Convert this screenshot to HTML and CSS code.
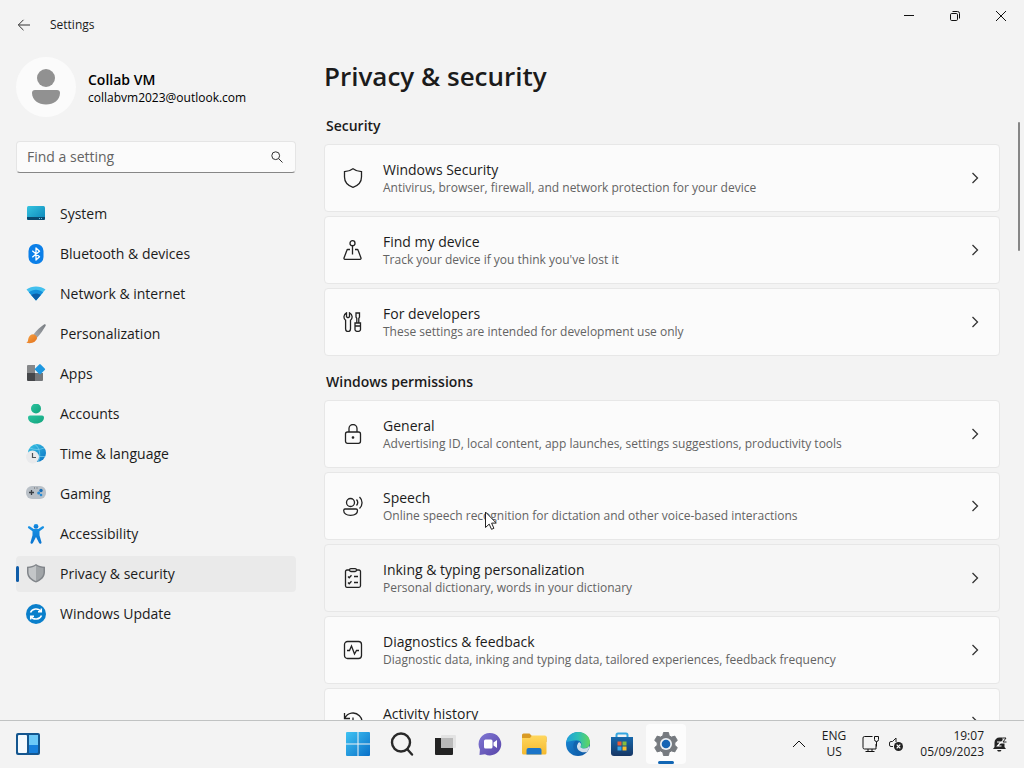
FILE: index.html
```html
<!DOCTYPE html>
<html lang="en">
<head>
  <meta charset="UTF-8" />
  <meta name="viewport" content="width=device-width, initial-scale=1.0" />
  <title>Settings</title>
  <link rel="stylesheet" href="styles.css">
</head>
<body>
  <svg class="defs" width="0" height="0" aria-hidden="true">
    <defs>
      <linearGradient id="gSystem" x1="0" y1="0" x2="1" y2="1"><stop offset="0" stop-color="#35c4e0"/><stop offset="1" stop-color="#0b84b8"/></linearGradient>
      <linearGradient id="gBlue" x1="0" y1="0" x2="0" y2="1"><stop offset="0" stop-color="#1a94e6"/><stop offset="1" stop-color="#0a74d0"/></linearGradient>
      <linearGradient id="gGreen" x1="0" y1="0" x2="1" y2="1"><stop offset="0" stop-color="#2cc3a0"/><stop offset="1" stop-color="#12a47c"/></linearGradient>
      <linearGradient id="gHandle" x1="1" y1="0" x2="0" y2="1"><stop offset="0" stop-color="#777b80"/><stop offset="1" stop-color="#a9adb2"/></linearGradient>
      <linearGradient id="gOrange" x1="0" y1="0" x2="1" y2="1"><stop offset="0" stop-color="#f7a548"/><stop offset="1" stop-color="#e2701a"/></linearGradient>
      <linearGradient id="gGlobe" x1="0" y1="0" x2="1" y2="1"><stop offset="0" stop-color="#3cc6e4"/><stop offset="1" stop-color="#0a72c4"/></linearGradient>
      <linearGradient id="gWin" x1="0" y1="0" x2="1" y2="1"><stop offset="0" stop-color="#3fc3f3"/><stop offset="1" stop-color="#0a70c8"/></linearGradient>
      <linearGradient id="gChat" x1="0" y1="0" x2="1" y2="1"><stop offset="0" stop-color="#8078d4"/><stop offset="1" stop-color="#5844a8"/></linearGradient>
      <linearGradient id="gFolder" x1="0" y1="0" x2="0" y2="1"><stop offset="0" stop-color="#ffd75e"/><stop offset="1" stop-color="#f4b92e"/></linearGradient>
      <linearGradient id="gEdge" x1="0" y1="0" x2="1" y2="0"><stop offset="0" stop-color="#1f9fdc"/><stop offset=".5" stop-color="#2dbfb4"/><stop offset="1" stop-color="#62d65c"/></linearGradient>
      <linearGradient id="gEdgeLow" x1="0" y1="0" x2="1" y2="1"><stop offset="0" stop-color="#1b8fdc"/><stop offset="1" stop-color="#0b4f9c"/></linearGradient>
      <linearGradient id="gStore" x1="0" y1="0" x2="0" y2="1"><stop offset="0" stop-color="#1668ac"/><stop offset="1" stop-color="#173765"/></linearGradient>
    </defs>
  </svg>

  <div class="window">
    <header class="titlebar">
      <button class="back" aria-label="Back">
        <svg width="14" height="14" viewBox="0 0 14 14" class="line"><path d="M13 7H1.500M6.500 1.800 1.300 7l5.200 5.200"/></svg>
      </button>
      <span class="app-name">Settings</span>
      <div class="caption-buttons">
        <button aria-label="Minimize"><svg width="12" height="12" viewBox="0 0 12 12" class="line dark"><path d="M1 5.500h10"/></svg></button>
        <button aria-label="Restore"><svg width="12" height="12" viewBox="0 0 12 12" class="line dark"><rect x="1.500" y="3.500" width="7" height="7" rx="1.200"/><path d="M3.500 1.500H8.500a2 2 0 0 1 2 2V8.500"/></svg></button>
        <button aria-label="Close"><svg width="12" height="12" viewBox="0 0 12 12" class="line dark"><path d="M1 1l10 10M11 1 1 11"/></svg></button>
      </div>
    </header>

    <div class="content">
      <aside class="sidebar">
        <div class="account">
          <span class="avatar">
            <svg width="30" height="36" viewBox="0 0 30 36" fill="#919191"><circle cx="15" cy="9" r="9"/><path d="M4 21h22a3 3 0 0 1 3 3c0 7-6.500 11.500-14 11.500S1 31 1 24a3 3 0 0 1 3-3z"/></svg>
          </span>
          <div class="account-text">
            <div class="account-name">Collab VM</div>
            <div class="account-mail">collabvm2023@outlook.com</div>
          </div>
        </div>

        <div class="search">
          <input id="find" type="text" placeholder="Find a setting" aria-label="Find a setting">
          <label for="find"><svg width="12" height="12" viewBox="0 0 12 12" class="line"><circle cx="4.700" cy="4.700" r="3.900"/><path d="M7.600 7.600l3.900 3.900"/></svg></label>
        </div>

        <nav class="menu">
          <a href="#"><svg width="20" height="20" viewBox="0 0 20 20"><rect x="1" y="2" width="18" height="14" rx="1.500" fill="url(#gSystem)"/><path d="M1 13h18v1.500a1.500 1.500 0 0 1-1.500 1.500h-15A1.500 1.500 0 0 1 1 14.500z" fill="#0a4a70"/><path d="M13 14.500h1M15 14.500h1" stroke="#6bc6e8"/></svg>System</a>
          <a href="#"><svg width="20" height="20" viewBox="0 0 20 20"><rect x="2.500" y="0" width="15" height="20" rx="7" fill="#0b7fe8"/><path d="M6.300 6.800l7.200 6-3.500 3.200V4l3.500 3.200-7.200 6" fill="none" stroke="#fff" stroke-width="1.300" stroke-linejoin="round"/></svg>Bluetooth &amp; devices</a>
          <a href="#"><svg width="20" height="20" viewBox="0 0 20 20"><path d="M.5 5.500C5.500 1.600 14.500 1.600 19.500 5.500L10 16.500z" fill="#42c0ee"/><path d="M2.800 8.200c4.300-3.400 10.100-3.400 14.400 0L10 16.500z" fill="#1590dc"/><path d="M5.200 11c3-2 6.600-2 9.600 0L10 16.500z" fill="#0c5ea8"/></svg>Network &amp; internet</a>
          <a href="#"><svg width="20" height="20" viewBox="0 0 20 20"><path d="M18 .6c1.200-.8 2.200.3 1.500 1.500-2 3.600-5.200 8.200-8.500 11.700L7.500 10.500C10.600 6.500 14.500 3 18 .6z" fill="url(#gHandle)"/><path d="M7.300 10.300c2 .4 3.400 1.700 3.800 3.700-.8 3.500-5 6.300-10.800 4.700 1.800-.8 1.600-2 2-4 .5-2.600 2.600-4.300 5-4.400z" fill="url(#gOrange)"/></svg>Personalization</a>
          <a href="#"><svg width="20" height="20" viewBox="0 0 20 20"><path d="M2 1h7v8H1V2a1 1 0 0 1 1-1z" fill="#858789"/><path d="M1 9h8v8H2a1 1 0 0 1-1-1z" fill="#45474a"/><path d="M9 9h8v7a1 1 0 0 1-1 1H9z" fill="#74777a"/><path d="M13.200.500a1 1 0 0 1 1.500 0l4 4a1 1 0 0 1 0 1.500l-4 4a1 1 0 0 1-1.500 0l-4-4a1 1 0 0 1 0-1.500z" fill="#1d97e0"/></svg>Apps</a>
          <a href="#"><svg width="20" height="20" viewBox="0 0 20 20" fill="url(#gGreen)"><circle cx="10" cy="4.500" r="5" /><path d="M4 11.500h12a2 2 0 0 1 2 2c0 3.800-3.600 6-8 6s-8-2.200-8-6a2 2 0 0 1 2-2z"/></svg>Accounts</a>
          <a href="#"><svg width="20" height="20" viewBox="0 0 20 20"><circle cx="11" cy="9" r="9" fill="url(#gGlobe)"/><path d="M9 0.500c5 3 6 12 3 17.500M4 4c4 2 10 2 14 0M12 12.500h7" fill="none" stroke="#8adcf3" stroke-width=".6"/><circle cx="6.500" cy="13" r="6.500" fill="#e9eaec"/><path d="M6.500 9v4.500h3.500" fill="none" stroke="#4c5055" stroke-width="1.200"/></svg>Time &amp; language</a>
          <a href="#"><svg width="20" height="20" viewBox="0 0 20 20"><rect x="0" y="2" width="20" height="13" rx="6" fill="#b9c0c7"/><path d="M3 8.500h5M5.500 6v5" stroke="#383d43" stroke-width="1.300"/><path d="M8 4h1M10.500 4h1" stroke="#666"/><circle cx="15" cy="6.500" r="1.700" fill="#176bb4"/><circle cx="12.700" cy="9" r="1.500" fill="#2a8bd4"/><circle cx="15" cy="11" r="1.300" fill="#2a8bd4"/></svg>Gaming</a>
          <a href="#"><svg width="20" height="20" viewBox="0 0 20 20" fill="url(#gBlue)"><circle cx="10" cy="2.400" r="2.400"/><path d="M3.700 2.300l4 2.600h4.600l4-2.600c1.400-.7 2.500 1 1.300 1.900L13.500 7.300v4l2 6.900c.3 1.500-1.700 2.300-2.400.9L10 13l-3.100 6.100c-.7 1.400-2.700.6-2.400-.9l2-6.900v-4L2.400 4.200C1.200 3.300 2.300 1.600 3.700 2.300z"/></svg>Accessibility</a>
          <a href="#" class="active"><svg width="20" height="20" viewBox="0 0 20 20"><path d="M10 0c2.500 2 5.500 2.700 9 2.800V8c0 5-3.500 8.500-9 10.500C4.500 16.500 1 13 1 8V2.800C4.500 2.700 7.500 2 10 0z" fill="#81858a"/><path d="M10 1.500c2.200 1.500 4.600 2.200 7.500 2.500v4c0 4-2.800 7-7.500 8.900z" fill="#a1a5a8"/><path d="M10 1.500C7.800 3 5.400 3.700 2.500 4v4c0 4 2.800 7 7.500 8.900z" fill="#c3c6c8"/></svg>Privacy &amp; security</a>
          <a href="#"><svg width="20" height="20" viewBox="0 0 20 20"><circle cx="10" cy="10" r="10" fill="#0a7fcb"/><path d="M4.500 8.500C6 4.300 12.500 3.500 15 7.500M15.300 4.500v3.300H12M15.500 11.500C14 15.700 7.500 16.500 5 12.500M4.700 15.500v-3.300H8" fill="none" stroke="#fff" stroke-width="1.500"/></svg>Windows Update</a>
        </nav>
      </aside>

      <main class="page">
        <h1>Privacy &amp; security</h1>

        <h2>Security</h2>
        <div class="cards">
          <button class="card">
            <svg width="20" height="20" viewBox="0 0 20 20" class="line icon"><path d="M10 .8C12.500 2.700 15 3.500 18.500 3.700V9c0 5-3.200 8.500-8.500 10.300C4.700 17.500 1.500 14 1.500 9V3.700C5 3.500 7.500 2.700 10 .8z"/></svg>
            <span class="text"><span class="name">Windows Security</span><span class="desc">Antivirus, browser, firewall, and network protection for your device</span></span>
            <svg width="8" height="12" viewBox="0 0 8 12" class="line chevron"><path d="M1.500 1l5 5-5 5"/></svg>
          </button>
          <button class="card">
            <svg width="20" height="20" viewBox="0 0 20 20" class="line icon"><circle cx="9.500" cy="3.200" r="2.500"/><path d="M9.500 6v8.500M7 9.500H4.800a1 1 0 0 0-.9.700L1 18a1 1 0 0 0 .9 1.300h15.200A1 1 0 0 0 18 18l-2.900-7.800a1 1 0 0 0-.9-.7H12"/></svg>
            <span class="text"><span class="name">Find my device</span><span class="desc">Track your device if you think you've lost it</span></span>
            <svg width="8" height="12" viewBox="0 0 8 12" class="line chevron"><path d="M1.500 1l5 5-5 5"/></svg>
          </button>
          <button class="card">
            <svg width="20" height="20" viewBox="0 0 20 20" class="line icon"><path d="M3.500.8v4l1.500 1 1.500-1v-4C9.800 2.300 9.800 6.700 7.500 8.200v8.900a2.400 2.400 0 0 1-4.900 0V8.200C.3 6.700.3 2.300 3.500.8zM13 1h3.500v4l-.7 1.500V11h-2V6.500L13 5zM12 11h5.500v6a2 2 0 0 1-2 2.300H14a2 2 0 0 1-2-2.300zM12 14h5.500"/></svg>
            <span class="text"><span class="name">For developers</span><span class="desc">These settings are intended for development use only</span></span>
            <svg width="8" height="12" viewBox="0 0 8 12" class="line chevron"><path d="M1.500 1l5 5-5 5"/></svg>
          </button>
        </div>

        <h2>Windows permissions</h2>
        <div class="cards">
          <button class="card">
            <svg width="20" height="20" viewBox="0 0 20 20" class="line icon"><rect x="2.500" y="8" width="15" height="11.300" rx="2"/><path d="M6 8V4.500a4 4 0 0 1 8 0V8"/><circle cx="10" cy="13.500" r=".7" fill="#222"/></svg>
            <span class="text"><span class="name">General</span><span class="desc">Advertising ID, local content, app launches, settings suggestions, productivity tools</span></span>
            <svg width="8" height="12" viewBox="0 0 8 12" class="line chevron"><path d="M1.500 1l5 5-5 5"/></svg>
          </button>
          <button class="card">
            <svg width="20" height="20" viewBox="0 0 20 20" class="line icon"><circle cx="7.500" cy="6.500" r="4"/><path d="M2 13h11a1.500 1.500 0 0 1 1.500 1.500c0 3-3 4.800-7 4.800s-6.800-1.800-6.800-4.800A1.500 1.500 0 0 1 2 13zM13.500 3.500c1.500 1.800 1.500 4.200 0 6M16.500 1c3.400 3.200 3.400 8.300 0 11.500"/></svg>
            <span class="text"><span class="name">Speech</span><span class="desc">Online speech recognition for dictation and other voice-based interactions</span></span>
            <svg width="8" height="12" viewBox="0 0 8 12" class="line chevron"><path d="M1.500 1l5 5-5 5"/></svg>
            <svg width="12" height="20" viewBox="0 0 12 20" class="cursor"><path d="M.5 1v15.500l3.700-3.400 2.300 5.200 2.400-1-2.300-5.200h4.700z" fill="#fff" stroke="#222"/></svg>
          </button>
          <button class="card hover">
            <svg width="20" height="20" viewBox="0 0 20 20" class="line icon"><path d="M7 2H4a1.500 1.500 0 0 0-1.500 1.500V18A1.500 1.500 0 0 0 4 19.300h12a1.500 1.500 0 0 0 1.500-1.500V3.500A1.500 1.500 0 0 0 16 2h-3"/><rect x="6.500" y=".7" width="7" height="2.800" rx="1.400"/><path d="M5 8.500l1.200 1.200L8.500 7.300M5 14.500l1.200 1.200 2.300-2.400M11 8.500h4M11 14.500h4"/></svg>
            <span class="text"><span class="name">Inking &amp; typing personalization</span><span class="desc">Personal dictionary, words in your dictionary</span></span>
            <svg width="8" height="12" viewBox="0 0 8 12" class="line chevron"><path d="M1.500 1l5 5-5 5"/></svg>
          </button>
          <button class="card">
            <svg width="20" height="20" viewBox="0 0 20 20" class="line icon"><rect x="1.500" y="1.500" width="17" height="17" rx="3"/><path d="M4 10.500h2.500L8.500 6l3 8 2-3.500H16"/></svg>
            <span class="text"><span class="name">Diagnostics &amp; feedback</span><span class="desc">Diagnostic data, inking and typing data, tailored experiences, feedback frequency</span></span>
            <svg width="8" height="12" viewBox="0 0 8 12" class="line chevron"><path d="M1.500 1l5 5-5 5"/></svg>
          </button>
          <button class="card">
            <svg width="20" height="20" viewBox="0 0 20 20" class="line icon"><path d="M1.500 1v5.500H7M1.800 6.300A9 9 0 1 1 1 10.500M10 5.500v5h4"/></svg>
            <span class="text"><span class="name">Activity history</span><span class="desc"></span></span>
            <svg width="8" height="12" viewBox="0 0 8 12" class="line chevron"><path d="M1.500 1l5 5-5 5"/></svg>
          </button>
        </div>
        <div class="scroll-thumb"></div>
      </main>
    </div>
  </div>

  <footer class="taskbar">
    <div class="side">
      <button aria-label="Widgets"><svg width="24" height="22" viewBox="0 0 24 22"><rect width="24" height="22" rx="2" fill="#14568f"/><rect x="2" y="2" width="9" height="18" rx="1" fill="#f4fafe"/><rect x="13" y="2" width="9" height="10" fill="#6cc9f8"/><path d="M13 12h9v7a1 1 0 0 1-1 1h-8z" fill="#1780dc"/></svg></button>
    </div>
    <div class="apps">
      <button aria-label="Start"><svg width="24" height="24" viewBox="0 0 24 24" fill="url(#gWin)"><path d="M1 0h10.500v11.500H0V1a1 1 0 0 1 1-1zM12.500 0H23a1 1 0 0 1 1 1v10.500H12.500zM0 12.500h11.500V24H1a1 1 0 0 1-1-1zM12.500 12.500H24V23a1 1 0 0 1-1 1H12.500z"/></svg></button>
      <button aria-label="Search"><svg width="24" height="24" viewBox="0 0 24 24" fill="none" stroke="#282828" stroke-width="2.400"><circle cx="11" cy="10.500" r="9"/><path d="M17.300 17.300l4.700 5.200" stroke-linecap="round"/></svg></button>
      <button aria-label="Task view"><svg width="24" height="24" viewBox="0 0 24 24"><rect x="7" y="3" width="15" height="13" rx="1" fill="#e3e3e3"/><path d="M1 6h6v10h12v6a1 1 0 0 1-1 1H2a1 1 0 0 1-1-1z" fill="#232323"/><path d="M7 6h12v10H7z" fill="#b9b9b9"/></svg></button>
      <button aria-label="Chat"><svg width="24" height="24" viewBox="0 0 24 24"><path d="M12 1a11.200 11.200 0 1 1-5 21.200L1.500 23 1.900 17.500A11.200 11.200 0 0 1 12 1z" fill="url(#gChat)"/><rect x="6" y="7.500" width="8.500" height="9" rx="1.500" fill="#fff"/><path d="M15.500 10.500L19 8v8l-3.500-2.500z" fill="#fff"/></svg></button>
      <button aria-label="File Explorer"><svg width="26" height="24" viewBox="0 0 26 24"><path d="M1 3a1.500 1.500 0 0 1 1.500-1.500h6L11 4H24a1.500 1.500 0 0 1 1.500 1.500V10H1z" fill="#d99a24"/><path d="M1 6h8l2-2.500H24A1.500 1.500 0 0 1 25.500 5V21a1.500 1.500 0 0 1-1.500 1.500H2.500A1.500 1.500 0 0 1 1 21z" fill="url(#gFolder)"/><path d="M7.500 16h11a2 2 0 0 1 2 2v4.500h-15V18a2 2 0 0 1 2-2z" fill="#1a74c8"/></svg></button>
      <button aria-label="Edge"><svg width="24" height="24" viewBox="0 0 24 24"><circle cx="12" cy="12" r="12" fill="url(#gEdgeLow)"/><path d="M.3 10C1.500 4 6.200 0 12 0c7 0 12 4.700 12 10.300 0 4-2.800 6.200-6 6.200-2.500 0-4.200-1-3.200-2.500 1.700-3-.3-5.800-4.300-5.800-4 0-6.700 1.200-10.200 1.800z" fill="url(#gEdge)"/><path d="M14.800 14c-1 1.500.7 2.500 3.200 2.500 2.200 0 4-.8 5-2.500l.6 1c-.5 1.800-1.400 3.500-2.700 5-6 1.400-10.500-2.200-9.900-6.500.2-1.500.8-2.800 1.900-3.500 1.900.8 2.500 2.200 1.900 4z" fill="#f3f3f3" opacity=".85"/><path d="M9.500 9c-3 2.500-3.500 8 1.500 12 3 1.800 6.500 1.200 9.500-.5C15 23 10 20 11 14c.2-1.800 1-3 2-4-1-.8-2-1.200-3.500-1z" fill="#1264ae"/></svg></button>
      <button aria-label="Microsoft Store"><svg width="24" height="24" viewBox="0 0 24 24"><path d="M6.500 6V3a1.500 1.500 0 0 1 1.500-1.500h8A1.500 1.500 0 0 1 17.500 3v3" fill="none" stroke="#35a6e0" stroke-width="2"/><path d="M1 5h22v16a3 3 0 0 1-3 3H4a3 3 0 0 1-3-3z" fill="url(#gStore)"/><path d="M7.500 9.500h4v4h-4z" fill="#ee5a34"/><path d="M12.500 9.500h4v4h-4z" fill="#86bc3c"/><path d="M7.500 14.500h4v4h-4z" fill="#37a7ea"/><path d="M12.500 14.500h4v4h-4z" fill="#f9bf2c"/></svg></button>
      <button aria-label="Settings" class="open"><svg width="24" height="24" viewBox="0 0 24 24"><path d="M9.500.5h5l.7 3.300 2.300 1.300 3.300-1 2.500 4.300L20.800 10.700v2.600l2.500 2.300-2.500 4.300-3.300-1-2.300 1.300-.7 3.300h-5l-.7-3.300-2.300-1.300-3.300 1L.7 15.600l2.500-2.300v-2.600L.7 8.400l2.500-4.300 3.300 1 2.300-1.300z" fill="#767a7f" stroke="#767a7f" stroke-linejoin="round"/><circle cx="12" cy="12" r="6" fill="#eef2f5"/><circle cx="12" cy="12" r="4.300" fill="#1564b4"/></svg></button>
    </div>
    <div class="tray">
      <button aria-label="Show hidden icons"><svg width="14" height="8" viewBox="0 0 14 8" class="line dark"><path d="M1 7l6-6 6 6"/></svg></button>
      <button class="lang">ENG<br>US</button>
      <button class="status" aria-label="Network and volume">
        <svg width="18" height="18" viewBox="0 0 18 18" class="line dark"><path d="M10.500 1.500h-8a1.500 1.500 0 0 0-1.500 1.500v9.500A1.500 1.500 0 0 0 2.500 14h11.500V9M3.500 16.500h9M6 14v2.500M10 14v2.500M12.500 1.500h4v3a2 2 0 0 1-4 0zM14.500 6.500v5"/></svg>
        <svg width="16" height="16" viewBox="0 0 16 16"><path d="M5 10.500H3A1.500 1.500 0 0 1 1.500 9V7A1.500 1.500 0 0 1 3 5.500h1.500L8 2v4" fill="none" stroke="#222"/><circle cx="10.500" cy="10.500" r="4.500" fill="#222"/><path d="M8.700 8.700l3.600 3.600M12.300 8.700l-3.600 3.600" stroke="#fff" stroke-width="1.200"/></svg>
      </button>
      <button class="clock">19:07<br>05/09/2023</button>
      <button aria-label="Notifications"><svg width="16" height="16" viewBox="0 0 16 16"><path d="M2.500 11V6.500a5 5 0 0 1 5-5h5V11l1.500 2H1z" fill="#222"/><path d="M5 14h4.500l-1 1.500H6z" fill="#222"/><path d="M5 6h4L5.500 10H9.500" fill="none" stroke="#fff" stroke-width="1.200"/><path d="M10.500 2H14l-3 4h3.500" fill="none" stroke="#f3f3f3" stroke-width="3"/><path d="M10.500 2H14l-3 4h3.500" fill="none" stroke="#222"/></svg></button>
    </div>
  </footer>
</body>
</html>
```
FILE: styles.css
```css
* {
  box-sizing: border-box;
  margin: 0;
  padding: 0;
}
body {
  height: 100vh;
  display: flex;
  flex-direction: column;
  overflow: hidden;
  background: #f3f3f3;
  color: #1b1b1b;
  font-family: 'Open Sans', 'Noto Sans', sans-serif;
  font-size: 14px;
  line-height: 20px;
}
button {
  border: none;
  background: none;
  color: inherit;
  font: inherit;
}
svg {
  display: block;
  flex-shrink: 0;
}
.defs {
  position: absolute;
}
.line {
  fill: none;
  stroke: #333;
}
.dark {
  stroke: #111;
}
.icon {
  stroke: #222;
  stroke-width: 1.3;
}
.chevron {
  stroke-width: 1.3;
}

/* window */
.window {
  flex: 1;
  min-height: 0;
  display: flex;
  flex-direction: column;
}
.titlebar {
  display: flex;
  align-items: center;
  height: 50px;
  padding-left: 17px;
}
.back {
  width: 16px;
  height: 16px;
}
.app-name {
  margin-left: 17px;
  font-size: 12px;
}
.caption-buttons {
  display: flex;
  align-self: flex-start;
  margin-left: auto;
}
.caption-buttons button {
  display: flex;
  align-items: center;
  justify-content: center;
  width: 46px;
  height: 32px;
}
.content {
  flex: 1;
  min-height: 0;
  display: flex;
}

/* sidebar */
.sidebar {
  width: 312px;
  flex-shrink: 0;
  padding: 7px 16px 0;
}
.account {
  display: flex;
  align-items: center;
  gap: 12px;
}
.avatar {
  display: flex;
  align-items: center;
  justify-content: center;
  width: 60px;
  height: 60px;
  border-radius: 50%;
  background: #fbfbfb;
}
.account-text {
  padding-top: 2px;
}
.account-name {
  font-weight: 600;
  color: #000;
}
.account-mail {
  font-size: 12px;
  line-height: 16px;
  color: #000;
}
.search {
  display: flex;
  align-items: center;
  height: 32px;
  margin-top: 24px;
  padding: 0 12px 0 10px;
  border: 1px solid #e5e5e5;
  border-bottom-color: #868686;
  border-radius: 4px;
  background: #fbfbfb;
}
.search input {
  flex: 1;
  min-width: 0;
  border: none;
  outline: none;
  background: none;
  font: inherit;
}
.search input::placeholder {
  color: #636363;
  opacity: 1;
}
.menu {
  display: flex;
  flex-direction: column;
  gap: 4px;
  margin-top: 23px;
}
.menu a {
  display: flex;
  align-items: center;
  gap: 14px;
  height: 36px;
  padding-left: 10px;
  border-radius: 4px;
  color: #1b1b1b;
  text-decoration: none;
}
.menu .active {
  position: relative;
  background: #eaeaea;
}
.menu .active::before {
  content: "";
  position: absolute;
  left: 0;
  top: 10px;
  width: 3px;
  height: 16px;
  border-radius: 2px;
  background: #0f5ca8;
}

/* page */
.page {
  position: relative;
  flex: 1;
  min-width: 0;
  padding: 6px 24px 0 12px;
  overflow: hidden;
}
h1 {
  font-size: 26px;
  font-weight: 600;
  line-height: 40px;
}
h2 {
  margin: 20px 0 8px 2px;
  font-size: 14px;
  font-weight: 600;
  line-height: 20px;
}
.cards {
  display: flex;
  flex-direction: column;
  gap: 4px;
}
.cards + h2 {
  margin-top: 16px;
}
.card {
  position: relative;
  display: flex;
  align-items: center;
  height: 68px;
  padding: 0 20px 0 18px;
  border: 1px solid #e7e7e7;
  border-radius: 4px;
  background: #fbfbfb;
  text-align: left;
}
.card.hover {
  background: #f6f6f6;
}
.text {
  flex: 1;
  min-width: 0;
  margin-left: 20px;
}
.name,
.desc {
  display: block;
}
.desc {
  min-height: 16px;
  font-size: 12px;
  line-height: 16px;
  color: #636363;
}
.cursor {
  position: absolute;
  left: 160px;
  top: 38px;
}
.scroll-thumb {
  position: absolute;
  top: 72px;
  right: 4px;
  width: 2px;
  height: 129px;
  border-radius: 1px;
  background: #868686;
}

/* taskbar */
.taskbar {
  display: flex;
  align-items: center;
  height: 48px;
  padding-bottom: 2px;
  border-top: 1px solid #c0c2c2;
  background: #f3f3f3;
}
.taskbar button {
  display: flex;
  align-items: center;
  justify-content: center;
}
.side,
.tray {
  flex: 1;
  display: flex;
  padding: 0 12px;
}
.side button,
.tray button {
  padding: 0 4px;
}
.apps {
  display: flex;
  gap: 4px;
}
.apps button {
  width: 40px;
  height: 40px;
  border-radius: 4px;
}
.apps .open {
  position: relative;
  background: #fcfcfc;
}
.apps .open::after {
  content: "";
  position: absolute;
  bottom: 0;
  left: 12px;
  width: 16px;
  height: 3px;
  border-radius: 2px;
  background: #1166b4;
}
.tray {
  align-items: center;
  justify-content: flex-end;
  font-size: 12px;
  line-height: 16px;
}
.lang {
  margin: 0 8px;
}
.status {
  gap: 8px;
}
.tray .clock {
  display: block;
  margin-left: 8px;
  text-align: right;
}
```
